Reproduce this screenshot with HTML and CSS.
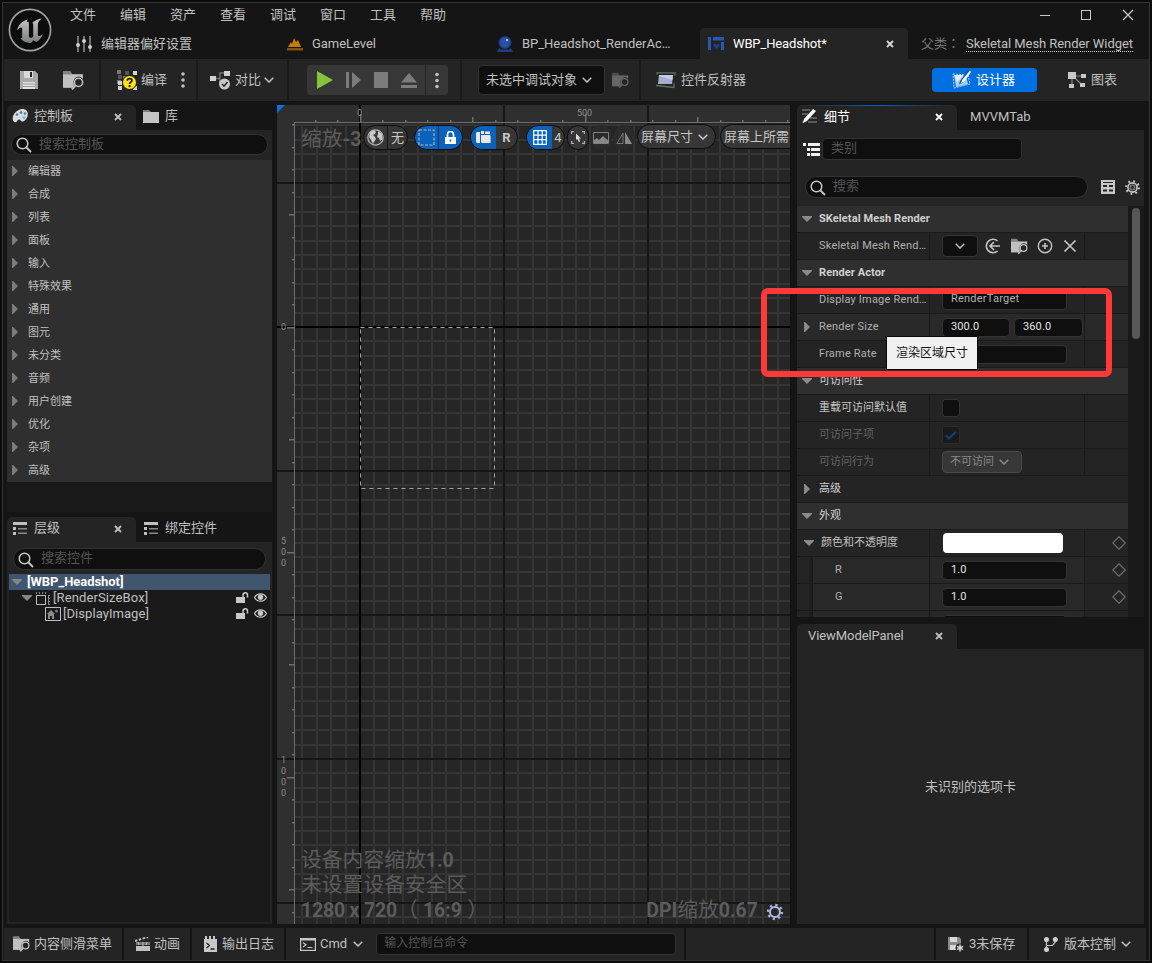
FILE: index.html
```html
<!DOCTYPE html>
<html lang="zh-CN">
<head>
<meta charset="utf-8">
<title>WBP_Headshot</title>
<link rel="stylesheet" href="styles.css">
</head>
<body>
<svg class="defs" width="0" height="0">
  <symbol id="chev" viewBox="0 0 10 6"><path d="M.7.7 5 5 9.300.7" fill="none" stroke="currentColor" stroke-width="1.5"/></symbol>
  <symbol id="close" viewBox="0 0 8 8"><path d="M1 1l6 6M7 1L1 7" stroke="currentColor" stroke-width="1.8"/></symbol>
  <symbol id="mag" viewBox="0 0 16 16"><circle cx="6.500" cy="6.500" r="5.300" fill="none" stroke="currentColor" stroke-width="1.5"/><path d="M10.500 10.500L15 15" stroke="currentColor" stroke-width="1.8"/></symbol>
  <symbol id="right" viewBox="0 0 6 10"><path d="M0 0h1l5 5-5 5H0z" fill="currentColor"/></symbol>
  <symbol id="down" viewBox="0 0 10 6"><path d="M0 0h10v1L5 6 0 1z" fill="currentColor"/></symbol>
  <symbol id="browse" viewBox="0 0 20 18"><path d="M0 0h7l2 3H0z" fill="currentColor" opacity=".6"/><path d="M0 3h19v13H0z" fill="currentColor"/><path d="M14.500 5.200a5.700 5.700 0 0 1 5.500 5.500V18H8l2.500-4.500a5.700 5.700 0 0 1 4-8.300z" fill="#242424"/><circle cx="14.800" cy="10.800" r="3.900" fill="none" stroke="currentColor" stroke-width="1.500"/><path d="M12 13.700L8.500 17.500" stroke="currentColor" stroke-width="1.900"/></symbol>
  <symbol id="tree" viewBox="0 0 15 13"><path d="M0 0h14v3H0zM0 5h3v3H0zM0 10h3v3H0z" fill="#c0c0c0"/><path d="M5 6h9v1.500H5zM5 10.500h9V12H5z" fill="#8a8a8a"/></symbol>
  <symbol id="unlock" viewBox="0 0 13 11"><path d="M0 5h9v6H0z" fill="#c8c8c8"/><path d="M7 5V3a2.200 2.200 0 0 1 4.500 0v2.500" fill="none" stroke="#c8c8c8" stroke-width="1.500"/></symbol>
  <symbol id="eye" viewBox="0 0 13 9"><path d="M.6 4.500C3-.4 10-.4 12.400 4.500 10 9.400 3 9.400.6 4.500z" fill="none" stroke="#c8c8c8" stroke-width="1.200"/><circle cx="6.500" cy="4.300" r="2.700" fill="#c8c8c8"/></symbol>
  <symbol id="diamond" viewBox="0 0 14 14"><path d="M7 .8L13.200 7 7 13.200.8 7z" fill="none" stroke="#6c6c6c" stroke-width="1.300"/></symbol>
  <symbol id="dots" viewBox="0 0 4 16"><circle cx="2" cy="2" r="1.800" fill="#c0c0c0"/><circle cx="2" cy="8" r="1.800" fill="#c0c0c0"/><circle cx="2" cy="14" r="1.800" fill="#c0c0c0"/></symbol>
</svg>

<div class="window">
  <header class="titlebar">
    <svg class="logo" width="44" height="44" viewBox="0 0 44 44">
      <defs><linearGradient id="metal" x1="0" y1="0" x2="0" y2="1"><stop offset="0" stop-color="#c4c4c4"/><stop offset="1" stop-color="#7b7f7e"/></linearGradient></defs>
      <circle cx="22" cy="22" r="20.600" fill="#0c0c0c" stroke="#a0a3a2" stroke-width="1.600"/>
      <path d="M19.600 11.500C14 13 10 17 9 22.500c1.500-2 3.500-3.500 4.500-3 .7.400.7 1.500.7 2.500v7c0 1-1 1.600-1.800 1.300 2.500 3.200 6.600 5 10.600 4.600l2.500-2.700 2.800 1.800c3.200-1.800 5.600-4.800 6.500-8.200-1.500 1.500-3.300 2.700-4.300 2.300-.6-.3-.6-1-.6-1.800V16.500c0-2.500 1.500-4 3.800-6-3.800.5-6.800 1.800-9.600 4.300.9.200 1.100.9 1.100 1.700v12c-.7.900-2 1.500-3 1.200-1-.2-1.300-1-1.300-2V16c0-2.500-1-2.500-2-1.800-.2-1 .3-1.900 1.200-2.700z" fill="url(#metal)"/>
    </svg>
    <div class="titlerows">
      <div class="menurow">
        <nav class="menu"><span>文件</span><span>编辑</span><span>资产</span><span>查看</span><span>调试</span><span>窗口</span><span>工具</span><span>帮助</span></nav>
        <div class="winbtns">
          <svg width="10" height="12" viewBox="0 0 10 12"><path d="M0 6.500h10" stroke="#c8c8c8"/></svg>
          <svg width="10" height="12" viewBox="0 0 10 12"><rect x=".5" y="1.500" width="9" height="9" fill="none" stroke="#c8c8c8"/></svg>
          <svg width="12" height="12" viewBox="0 0 12 12"><path d="M1 1l10 10M11 1L1 11" stroke="#c8c8c8" stroke-width="1.300"/></svg>
        </div>
      </div>
      <div class="doctabs">
        <div class="doctab t1"><svg width="16" height="16" viewBox="0 0 16 16"><path d="M2 0v16M8 0v16M14 0v16" stroke="#b0b0b0" stroke-width="1.200"/><g fill="#d0d0d0"><circle cx="2" cy="9" r="2"/><circle cx="8" cy="5" r="2"/><circle cx="14" cy="11" r="2"/></g></svg><span>编辑器偏好设置</span></div>
        <div class="doctab t2"><svg width="16" height="14" viewBox="0 0 16 14"><path d="M1 10L4 5l1 2 2-6 2 4 2-2 3 7z" fill="#c67a08"/><path d="M0 11h16v2.500H0z" fill="#83520b"/></svg><span>GameLevel</span></div>
        <div class="doctab t3"><svg width="16" height="16" viewBox="0 0 16 16"><circle cx="8" cy="6.500" r="6.500" fill="#1f3e80"/><circle cx="8" cy="6.500" r="5" fill="#2950a2"/><circle cx="10" cy="4" r="1.200" fill="#9fb8ea"/><path d="M2 12l2 1.500h8L14 12l2 4H0z" fill="#1f3e80"/></svg><span>BP_Headshot_RenderAc…</span></div>
        <div class="doctab t4"><svg width="16" height="14" viewBox="0 0 16 14"><path d="M0 0h3v13H0zM5 0h11v3.500H5zM13 5h3v8h-3z" fill="#2857b8"/><path d="M8.500 12L5.500 9V7.500L7 6.800l1.500 1 1.500-1 1.500.7V9z" fill="#223f7c"/></svg><span>WBP_Headshot*</span><svg class="x" width="8" height="8"><use href="#close"/></svg></div>
        <div class="parent"><span lang="zh-TW">父类：</span><a>Skeletal Mesh Render Widget</a></div>
      </div>
    </div>
  </header>

  <div class="toolbar">
    <div class="tg g1">
      <svg width="18" height="18" viewBox="0 0 18 18"><path d="M0 0h15l3 3v15H0z" fill="#a8a8a8"/><path d="M4 0h9v7H4z" fill="#dadada"/><path d="M10 1h2v5h-2z" fill="#242424"/><path d="M3 11h12v7H3z" fill="#e0e0e0"/><path d="M3 13h12M3 15.500h12" stroke="#9a9a9a"/></svg>
      <svg class="brw" width="21" height="19"><use href="#browse"/></svg>
    </div>
    <div class="tg g2">
      <svg width="21" height="20" viewBox="0 0 21 20"><path d="M0 0h4v4H0zM0 10h4v4H0zM6 6h4v4H6z" fill="#777"/><path d="M8 1h4v4H8zM1 5h4v4H1z" fill="#555"/><path d="M16 1h4v4h-4zM1 11h4v4H1zM1 16h4v4H1zM16 16h4v4h-4z" fill="#d0d0d0"/><circle cx="12.500" cy="12.500" r="7" fill="#ffe11a" stroke="#151515"/><path d="M10.300 10.800c0-3 4.600-3 4.600-.3 0 1.700-2.300 1.700-2.300 3.500" fill="none" stroke="#111" stroke-width="1.700"/><circle cx="12.600" cy="16.200" r="1.100" fill="#111"/></svg>
      <span>编译</span><svg class="dt" width="4" height="16"><use href="#dots"/></svg>
    </div>
    <div class="tg g3">
      <svg width="21" height="20" viewBox="0 0 21 20"><path d="M5 8.500h5V3h5M10 8.500v5" fill="none" stroke="#777" stroke-width="1.300"/><path d="M0 6h6v5H0zM14 1h6v5h-6z" fill="#d0d0d0"/><circle cx="14.500" cy="14" r="5.500" fill="#c8c8c8"/><path d="M12 14l2 2.200 3.500-4.200" fill="none" stroke="#222" stroke-width="1.500"/></svg>
      <span>对比</span><svg width="10" height="6"><use href="#chev"/></svg>
    </div>
    <div class="tg g4">
      <div class="play">
        <svg width="16" height="18" viewBox="0 0 16 18"><path d="M0 0l16 9-16 9z" fill="#86c43c"/></svg>
        <svg width="15" height="16" viewBox="0 0 15 16"><path d="M0 0h3v16H0zM6 0l9 8-9 8z" fill="#7c7c7c"/></svg>
        <svg width="14" height="16" viewBox="0 0 14 16"><path d="M0 0h14v16H0z" fill="#7c7c7c"/></svg>
        <svg width="16" height="15" viewBox="0 0 16 15"><path d="M8 0l8 9.500H0zM0 12h16v3H0z" fill="#7c7c7c"/></svg>
        <i></i>
        <svg width="4" height="17"><use href="#dots"/></svg>
      </div>
    </div>
    <div class="tg g5">
      <div class="debug"><span>未选中调试对象</span><svg width="10" height="6"><use href="#chev"/></svg></div>
      <svg class="dim" width="17" height="17"><use href="#browse"/></svg>
    </div>
    <div class="tg g6">
      <svg width="20" height="17" viewBox="0 0 20 17"><path d="M1 2.500V.8h18v3M18 11v4.500L0 13.500" fill="none" stroke="#597459" stroke-width="1.300"/><path d="M3 3h14l-1 9H2z" fill="#a7adcf"/><path d="M3 3h14l-.6 5L3 4z" fill="#c6cae2"/></svg>
      <span>控件反射器</span>
    </div>
    <div class="designer"><svg width="19" height="19" viewBox="0 0 19 19"><path d="M2 5l12 1 2 8-12 3z" fill="#a8cdf5"/><path d="M2 5h10l-7 7z" fill="#e0eefc"/><path d="M1 4l15 1 2 9-16 4z" fill="none" stroke="#e4effa" stroke-width=".8" stroke-dasharray="2 1"/><path d="M8 11L16 0l3 1-7 11-5 2.500z" fill="#0a58ac"/><path d="M18 .5l-7.500 9-2 4 4-2L19 2z" fill="#fff"/></svg><span>设计器</span></div>
    <div class="graph"><svg width="19" height="16" viewBox="0 0 19 16"><path d="M4 4h12M4 4v9M5 4l9 9" stroke="#8a8a8a" stroke-width="1.200"/><path d="M0 0h8v7H0zM13 2h5v4h-5zM1 12h5v4H1zM12 11h5v4h-5z" fill="#c8c8c8"/></svg><span>图表</span></div>
  </div>

  <main class="main">
    <aside class="left">
      <div class="tabs">
        <div class="tab on w129"><svg width="16" height="14" viewBox="0 0 16 14"><path d="M8 .5C13-1 16 2 15.800 5c0 4-2.800 7-5 7.500-2.500.5-2-2.500-4-2-2 .6-1.500 3-3.800 2.700C-1 12.500 0 3 8 .5z" fill="#d8dde2"/><circle cx="5" cy="5.500" r="1.300" fill="#4d7fa6"/><circle cx="9" cy="3.500" r="1.300" fill="#56708c"/><circle cx="13" cy="4.500" r="1.300" fill="#4d7fa6"/><circle cx="12" cy="8.500" r="1.600" fill="#7db4e0"/></svg><span>控制板</span><svg class="x" width="8" height="8"><use href="#close"/></svg></div>
        <div class="tab"><svg width="16" height="13" viewBox="0 0 16 13"><path d="M0 0h6l2 2H0z" fill="#7c7c7c"/><path d="M0 2h16v11H0z" fill="#c4c4c4"/></svg><span>库</span></div>
      </div>
      <div class="palette">
        <div class="search"><svg width="16" height="16"><use href="#mag"/></svg><span>搜索控制板</span></div>
        <ul class="cats">
          <li><svg><use href="#right"/></svg>编辑器</li><li><svg><use href="#right"/></svg>合成</li><li><svg><use href="#right"/></svg>列表</li><li><svg><use href="#right"/></svg>面板</li><li><svg><use href="#right"/></svg>输入</li><li><svg><use href="#right"/></svg>特殊效果</li><li><svg><use href="#right"/></svg>通用</li><li><svg><use href="#right"/></svg>图元</li><li><svg><use href="#right"/></svg>未分类</li><li><svg><use href="#right"/></svg>音频</li><li><svg><use href="#right"/></svg>用户创建</li><li><svg><use href="#right"/></svg>优化</li><li><svg><use href="#right"/></svg>杂项</li><li><svg><use href="#right"/></svg>高级</li>
        </ul>
      </div>
      <div class="tabs low">
        <div class="tab on w129"><svg width="15" height="13"><use href="#tree"/></svg><span>层级</span><svg class="x" width="8" height="8"><use href="#close"/></svg></div>
        <div class="tab"><svg width="15" height="13"><use href="#tree"/></svg><span>绑定控件</span></div>
      </div>
      <div class="hier">
        <div class="search"><svg width="16" height="16"><use href="#mag"/></svg><span>搜索控件</span></div>
        <div class="treebox">
          <div class="tr sel"><svg width="10" height="6"><use href="#down"/></svg><b>[WBP_Headshot]</b></div>
          <div class="tr r2"><svg width="10" height="6"><use href="#down"/></svg><svg class="ic" width="14" height="14" viewBox="0 0 14 14"><path d="M.5 3.500h9v9h-9z" fill="none" stroke="#c0c0c0"/><path d="M.5 0v2M3.500 0v2M6.500 0v2M9.500 0v2M12 3.500h2M12 6.500h2M12 9.500h2M12 12.500h2M12.500 4v9" stroke="#888" fill="none"/></svg><span>[RenderSizeBox]</span><svg class="lk" width="13" height="11"><use href="#unlock"/></svg><svg class="ey" width="13" height="9"><use href="#eye"/></svg></div>
          <div class="tr r3"><svg class="ic" width="16" height="14" viewBox="0 0 16 14"><path d="M.5.5h15v13H.500z" fill="none" stroke="#c0c0c0"/><path d="M2 7l4-4 4 4H9v5H7V9H5v3H3V7z" fill="#8a8a8a"/><circle cx="11.500" cy="4" r="1.500" fill="#777"/></svg><span>[DisplayImage]</span><svg class="lk" width="13" height="11"><use href="#unlock"/></svg><svg class="ey" width="13" height="9"><use href="#eye"/></svg></div>
        </div>
      </div>
    </aside>

    <section class="canvas">
      <svg id="grid" width="513" height="819" viewBox="277 105 513 819"></svg>
      <div class="zoomtxt">缩放<b>-3</b></div>
      <div class="pills">
        <div class="pill p1"><span class="c"><svg width="17" height="17" viewBox="0 0 17 17"><circle cx="8.500" cy="8.500" r="7.700" fill="#3a3a3a" stroke="#b8b8b8" stroke-width="1.200"/><path d="M3 3l4-2 2 2-1 2-2 1 2 2 1 2-2 3-1 2-2-4-2-3zM11 2l4 3 .5 5-2.500 2-1-3-2-1 1-3z" fill="#c8c8c8"/></svg></span><span>无</span></div>
        <div class="pill p2 blue"><span><svg width="17" height="17" viewBox="0 0 17 17"><rect x="1" y="1" width="15" height="15" fill="none" stroke="#b9b19c" stroke-width="1.200" stroke-dasharray="3 1.500"/></svg></span><span><svg width="11" height="13" viewBox="0 0 11 13"><path d="M0 6h11v7H0z" fill="#fff"/><path d="M2.500 6V3.500a3 3 0 0 1 6 0V6" fill="none" stroke="#fff" stroke-width="1.700"/><path d="M5.500 8.500v2" stroke="#0b5fb8" stroke-width="1.500"/></svg></span></div>
        <div class="pill p3"><span class="bl"><svg width="15" height="13" viewBox="0 0 15 13"><path d="M1 1h3v11H1L0 11V2zM5 0h3v3H5zM9 .5h5V3H9zM5 4h9l.6 1v7H6L5 11z" fill="#e8e8e8"/></svg></span><b>R</b></div>
        <div class="pill p4"><span class="bl"><svg width="14" height="15" viewBox="0 0 14 15"><path d="M.7.7h12.600v13.600H.700zM.7 5.200h12.600M.7 9.700h12.600M5 .7v13.600M9.200.7v13.600" fill="none" stroke="#fff" stroke-width="1.200"/></svg></span><span class="four">4</span></div>
        <div class="pill rd"><svg width="14" height="13" viewBox="0 0 14 13"><path d="M.6 3V.6H3M11 .6h2.400V3M.6 10v2.400H3M11 12.400h2.400V10" fill="none" stroke="#aaa" stroke-width="1.200"/><path d="M5 2.500l5 5H8l1 3-1.300.500-1.200-3L5 9z" fill="#ddd"/></svg></div>
        <div class="pill rd off"><svg width="16" height="12" viewBox="0 0 16 12"><path d="M.5.5h15v11H.500z" fill="none" stroke="#808080"/><path d="M1 11V8l3-2 2 2 4-4 2 2 3 2v3z" fill="#888"/></svg></div>
        <div class="pill rd off"><svg width="16" height="12" viewBox="0 0 16 12"><path d="M7 1v10.500H1z" fill="none" stroke="#777"/><path d="M9 0v12h7z" fill="#8a8a8a"/></svg></div>
        <div class="pill p5"><span>屏幕尺寸</span><svg width="10" height="6"><use href="#chev"/></svg></div>
        <div class="pill p6"><span>屏幕上所需</span></div>
      </div>
      <div class="info"><div>设备内容缩放<b>1.0</b></div><div>未设置设备安全区</div><div><b class="res">1280 x 720</b>（ <b>16:9</b> ）</div></div>
      <div class="dpi"><b>DPI</b>缩放<b>0.67</b><svg width="18" height="18" viewBox="0 0 18 18"><circle cx="9" cy="9" r="5" fill="none" stroke="#b0bde8" stroke-width="2"/><circle cx="9" cy="9" r="7" fill="none" stroke="#a3b3ea" stroke-width="2.400" stroke-dasharray="2.200 3.300"/></svg></div>
    </section>

    <aside class="right">
      <div class="tabs">
        <div class="tab on w160 hot"><svg width="16" height="15" viewBox="0 0 16 15"><path d="M0 1h8M0 5h6M8 9h7M6 13h9M0 13h2" stroke="#6c6c6c" stroke-width="1.500"/><path d="M11 0l3 2L5 12l-4 2 1-4z" fill="#fff"/></svg><span>细节</span><svg class="x" width="8" height="8"><use href="#close"/></svg></div>
        <div class="tab mv"><span>MVVMTab</span></div>
      </div>
      <div class="details">
        <div class="catrow"><svg width="17" height="13" viewBox="0 0 17 13"><path d="M0 0h3v3H0zM5 0h12v3H5zM4 5h3v3H4zM8 5h9v3H8zM4 10h3v3H4zM8 10h9v3H8z" fill="#f0f0f0"/></svg><div class="inp">类别</div></div>
        <div class="srow"><div class="search"><svg width="16" height="16"><use href="#mag"/></svg><span>搜索</span></div>
          <svg class="tb" width="14" height="14" viewBox="0 0 14 14"><path d="M0 0h14v14H0z" fill="#c8c8c8"/><path d="M2 5h4v2H2zM8 5h4v2H8zM2 9.500h4v2H2zM8 9.500h4v2H8zM2 2h10v1H2z" fill="#242424"/></svg>
          <svg width="15" height="15" viewBox="0 0 15 15"><circle cx="7.500" cy="7.500" r="4.600" fill="none" stroke="#c8c8c8" stroke-width="1.600"/><circle cx="7.500" cy="7.500" r="6.400" fill="none" stroke="#c8c8c8" stroke-width="2" stroke-dasharray="1.800 3.226"/><circle cx="7.500" cy="7.500" r="2.200" fill="none" stroke="#777" stroke-width="1.500"/></svg></div>
        <div class="props">
          <div class="rows">
            <div class="row hd"><svg class="dn"><use href="#down"/></svg><b>SKeletal Mesh Render</b></div>
            <div class="row"><div class="n">Skeletal Mesh Rend…</div><div class="v"><div class="combo"><svg width="10" height="6"><use href="#chev"/></svg></div>
              <div class="acts"><svg width="16" height="16" viewBox="0 0 16 16"><path d="M12.500 3A6.700 6.700 0 1 0 12.500 13" fill="none" stroke="#c4c4c4" stroke-width="1.600"/><path d="M15 8H5M9 4L5 8l4 4" fill="none" stroke="#c4c4c4" stroke-width="1.700"/></svg><svg width="17" height="17"><use href="#browse"/></svg><svg width="16" height="16" viewBox="0 0 16 16"><circle cx="8" cy="8" r="6.700" fill="none" stroke="#c4c4c4" stroke-width="1.400"/><path d="M8 5v6M5 8h6" stroke="#c4c4c4" stroke-width="1.600"/></svg><svg width="14" height="14" viewBox="0 0 14 14"><path d="M1.500 1.500l11 11M12.500 1.500l-11 11" stroke="#c4c4c4" stroke-width="1.700"/></svg></div></div><div class="e"></div></div>
            <div class="row hd"><svg class="dn"><use href="#down"/></svg><b>Render Actor</b></div>
            <div class="row"><div class="n">Display Image Rend…</div><div class="v"><div class="f w124 gray tall">RenderTarget</div></div><div class="e"></div></div>
            <div class="row lit"><div class="n"><svg class="rt"><use href="#right"/></svg>Render Size</div><div class="v"><div class="f w67">300.0</div><div class="f w68">360.0</div></div><div class="e"></div></div>
            <div class="row"><div class="n">Frame Rate</div><div class="v"><div class="f w124"></div></div><div class="e"></div></div>
            <div class="row hd"><svg class="dn"><use href="#down"/></svg><span>可访问性</span></div>
            <div class="row"><div class="n bright">重载可访问默认值</div><div class="v"><div class="chk"></div></div><div class="e"></div></div>
            <div class="row"><div class="n faint">可访问子项</div><div class="v"><div class="chk dis"><svg width="12" height="9" viewBox="0 0 12 9"><path d="M1 4.500l3 3L11 .8" fill="none" stroke="#0b477f" stroke-width="1.900"/></svg></div></div><div class="e"></div></div>
            <div class="row"><div class="n faint">可访问行为</div><div class="v"><div class="sel2">不可访问<svg width="10" height="6"><use href="#chev"/></svg></div></div><div class="e"></div></div>
            <div class="row adv"><svg class="ar"><use href="#right"/></svg><span>高级</span></div>
            <div class="row hd"><svg class="dn"><use href="#down"/></svg><span>外观</span></div>
            <div class="row"><div class="n col"><svg class="rt2"><use href="#down"/></svg>颜色和不透明度</div><div class="v"><div class="white"></div></div><div class="e"><svg width="14" height="14"><use href="#diamond"/></svg></div></div>
            <div class="row sub"><div class="n">R</div><div class="v"><div class="f w124">1.0</div></div><div class="e"><svg width="14" height="14"><use href="#diamond"/></svg></div></div>
            <div class="row sub"><div class="n">G</div><div class="v"><div class="f w124">1.0</div></div><div class="e"><svg width="14" height="14"><use href="#diamond"/></svg></div></div>
            <div class="row sub"><div class="n"></div><div class="v"><div class="f w124"></div></div><div class="e"></div></div>
          </div>
          <div class="track"><div class="thumb"></div></div>
        </div>
      </div>
      <div class="tabs vm"><div class="tab on w160"><span>ViewModelPanel</span><svg class="x" width="8" height="8"><use href="#close"/></svg></div></div>
      <div class="vmbody">未识别的选项卡</div>
    </aside>
  </main>

  <footer class="status">
    <div class="s s1"><svg width="17" height="16"><use href="#browse"/></svg><span>内容侧滑菜单</span></div>
    <div class="s s2"><svg width="16" height="14" viewBox="0 0 16 14"><path d="M0 4L13 0" stroke="#c0c0c0" stroke-width="2" stroke-dasharray="2.500 1.500"/><path d="M1 5h14v3H1z" fill="#777"/><path d="M1 9h14v5H1z" fill="#c0c0c0"/><path d="M3 5l1 3M8 5v5M12 5l-1 3" stroke="#c0c0c0"/></svg><span>动画</span></div>
    <div class="s s3"><svg width="13" height="16" viewBox="0 0 13 16"><path d="M0 3h1V0h2v3h2V0h2v3h2V0h2v3h2v13H0z" fill="#c8c8c8"/><path d="M2.500 7l3 2.500-3 2.500M6.500 13h4" fill="none" stroke="#222" stroke-width="1.300"/></svg><span>输出日志</span></div>
    <div class="s s4"><svg width="16" height="13" viewBox="0 0 16 13"><rect x=".6" y=".6" width="14.800" height="11.800" fill="none" stroke="#c8c8c8" stroke-width="1.200"/><path d="M0 0h16v2.500H0z" fill="#c8c8c8"/><path d="M3 4.500l3 2.200L3 9M7.500 9.500h5" fill="none" stroke="#c8c8c8" stroke-width="1.200"/></svg><span>Cmd</span><svg width="10" height="6"><use href="#chev"/></svg><div class="cmd">输入控制台命令</div></div>
    <div class="s s5"></div>
    <div class="s s6"><svg width="16" height="15" viewBox="0 0 16 15"><path d="M0 0h11l2 2v6l-4 5H0z" fill="#8a8a8a"/><path d="M2 0h7v5H2zM2 8h6v5H2z" fill="#d8d8d8"/><circle cx="12" cy="11" r="4.500" fill="#242424"/><path d="M12 7.500v7M9 9.300l6 3.400M15 9.300l-6 3.400" stroke="#d8d8d8" stroke-width="1.500"/></svg><span>3未保存</span></div>
    <div class="s s7"><svg width="14" height="15" viewBox="0 0 14 15"><path d="M2.500 2.500v10M2.500 8.500h6l2.500-3v-3" fill="none" stroke="#c0c0c0" stroke-width="1.200"/><g fill="#d0d0d0"><circle cx="2.500" cy="2.500" r="2.500"/><circle cx="11.300" cy="2.500" r="2.500"/><circle cx="2.500" cy="12.500" r="2.500"/></g></svg><span>版本控制</span><svg width="10" height="6"><use href="#chev"/></svg></div>
  </footer>

  <div class="tooltip">渲染区域尺寸</div>
  <div class="mark"></div>
</div>
<script src="grid.js"></script>
</body>
</html>
```
FILE: styles.css
```css
*{box-sizing:border-box}
body{margin:0;background:#0a0a0a;font-family:Roboto,"Noto Sans CJK SC",sans-serif;font-size:13px;line-height:16px;color:#c0c0c0;overflow:hidden}
svg{display:block;flex:none}
span{white-space:nowrap}
.defs{position:absolute}
.window{position:relative;width:1152px;height:963px;padding:3px 3px 3px 4px;background:#151515;display:flex;flex-direction:column;overflow:hidden;box-shadow:inset 0 0 0 2px #0b0b0b,inset 0 0 0 3px #353535}

.titlebar{display:flex;height:56px;flex:none}
.logo{margin:5px 0 0 4px}
.titlerows{flex:1;display:flex;flex-direction:column}
.menurow{height:25px;display:flex;justify-content:space-between}
.menu{display:flex;padding-left:18px}
.menu span{width:50px;line-height:23px}
.winbtns{display:flex;align-items:center;gap:31px;padding:0 15px 2px 0}
.doctabs{display:flex;height:31px}
.doctab{display:flex;align-items:center;height:31px}
.t1{padding-left:24px;width:235px;gap:9px}
.t2{width:210px;gap:9px;letter-spacing:-.05px}
.t3{width:203px;gap:9px;letter-spacing:-.02px}
.t4{width:208px;background:#242424;border-radius:5px 5px 0 0;padding-left:8px;gap:9px;color:#fff;letter-spacing:-.14px}
.t4 .x{margin-left:auto;margin-right:14px;color:#d8d8d8}
.parent{display:flex;align-items:center;padding-left:13px;color:#777}
.parent span{width:45px;font-family:"Noto Sans CJK TC",sans-serif;line-height:16px;margin-top:-1px}
.parent a{color:#c0c0c0;border-bottom:1px dotted #d0d0d0;line-height:15px;white-space:nowrap;margin-top:1px;letter-spacing:-.06px}

.toolbar{display:flex;height:42px;flex:none;background:#242424;align-items:center}
.tg{display:flex;align-items:center;height:40px;border-right:2px solid #1a1a1a}
.g1{width:97px;padding-left:16px;gap:25px}
.g2{width:97px;padding-left:16px;gap:3px}
.g2 .dt{margin-left:11px}
.g3{width:91px;padding-left:12px;gap:4px}
.g3 svg:last-child{margin-left:-1px}
.g4{width:173px;padding-left:18px}
.play{display:flex;align-items:center;width:141px;height:30px;background:#373737;border-radius:4px;padding-left:10px;gap:13px}
.play i{width:1px;height:30px;background:#242424;margin:0 -5px 0 -5px}
.play svg:last-child{margin-left:1px}
.g5{width:179px;padding-left:16px;gap:7px}
.debug{display:flex;align-items:center;width:127px;height:30px;border:1px solid #343434;border-radius:4px;background:#0f0f0f;padding-left:7px;gap:5px}
.dim{color:#666}
.g6{border:0;padding-left:15px;gap:5px;width:291px}
.designer{display:flex;align-items:center;width:105px;height:24px;background:#0070e0;border-radius:4px;padding-left:20px;gap:5px;color:#fff;margin-top:-1px}
.graph{display:flex;align-items:center;gap:4px;margin-left:31px}

.main{display:grid;grid-template-columns:265px 513px 347px;column-gap:5px;margin:4px 0 4px 3px;height:819px;flex:none}
.right{margin-left:2px;width:347px}
.left,.right{display:flex;flex-direction:column;min-width:0}
.tabs{display:flex;height:25px;flex:none}
.tab{display:flex;align-items:center;gap:6px;padding:0 0 2px 7px;height:25px}
.left .tab{padding-bottom:3px}
.low .tab>svg:first-child{margin-left:1px}
.tab.on{background:#242424;border-radius:5px 5px 0 0;padding-left:5px}
.tab .x{margin-left:auto;margin-right:14px;margin-top:1px}
.w129{width:129px}
.w160{width:160px}
.hot{color:#fff;background:linear-gradient(90deg,#242424,#0b62bd 50%,#242424) top/100% 1px no-repeat,#242424!important}
.mv{padding-left:13px;letter-spacing:.03px}
.search{display:flex;align-items:center;height:21px;border:1px solid #323232;border-radius:11px;background:#0f0f0f;color:#555;gap:7px;padding-left:4px}
.search svg{color:#c8c8c8;margin-top:1px}
.search span{margin-top:-2px}
.palette{height:382px;flex:none;border-top:4px solid #242424;background:linear-gradient(#242424 26px,#1a1a1a 26px)}
.palette .search{margin:0 4px 0}
.cats{list-style:none;margin:5px 0 0;padding:0;background:#2f2f2f;font-size:11px}
.cats li{height:23px;display:flex;align-items:center;gap:10px;padding-left:5px}
.cats svg{width:6px;height:10px;color:#7c7c7c;margin-top:-1px}
.low{margin-top:5px}
.hier{flex:1;background:#242424;display:flex;flex-direction:column;padding:6px 2px 2px}
.hier .search{margin:0 4px 5px;flex:none;height:22px}
.treebox{flex:1;background:#1a1a1a;margin-top:-1px}
.tr{height:16px;display:flex;align-items:center;padding-left:3px}
.tr.sel{background:#40566f;color:#fff;gap:5px;font-size:13px;letter-spacing:-.05px}
.tr>svg:first-child{color:#858585}
.r2{padding:0 3px 0 13px;letter-spacing:.12px}
.r3{padding:0 3px 0 36px;letter-spacing:.06px}
.r2 .ic{margin:1px 3px 0 4px}
.tr.r3 .ic{margin:0 2px 0 0;color:inherit}
.lk{margin:-1px 5px 0 auto}
.ey{margin-top:-2px}

.canvas{position:relative;overflow:hidden;background:#262626}
#grid{font:9px Roboto,sans-serif}
.zoomtxt,.info,.dpi{position:absolute;font-size:20.800px;color:#5c5c5c;line-height:25px;white-space:nowrap}
.zoomtxt b,.info b,.dpi b{font-size:19.500px}
.res{letter-spacing:-.2px}
.zoomtxt{left:24px;top:22px}
.info{left:24px;top:743px}
.dpi{right:6px;top:793px;display:flex;align-items:center}
.dpi svg{margin-left:8px;margin-top:3px}
.pills{position:absolute;left:86px;top:20px;display:flex;height:25px;color:#c8c8c8}
.pill{display:flex;flex:none;height:25px;border:1px solid #0c0c0c;border-radius:13px;background:rgba(56,56,56,.9);overflow:hidden;align-items:center}
.pill span,.pill b{display:flex;align-items:center;justify-content:center;height:25px}
.p1{width:45px;margin-right:6px}
.p1>span{width:20px}
.p1 .c{width:25px;border-right:1px solid #151515}
.p2{width:49px;margin-right:7px;background:#0b62bd}
.p2>span{flex:1}.p2>span+span{border-left:1px solid #06346a}
.p3{width:48px;margin-right:8px}
.bl{width:25px;background:#0b62bd}
.p3 b{flex:1}
.p4{width:39px;margin-right:2px}
.four{flex:1}
.rd{width:22px;margin-right:1px;justify-content:center}
.off{border-color:#2a2a2a;background:rgba(44,44,44,.9)}
.p5{width:79px;padding-left:3px;gap:5px;margin:-1px 4px 0 1px}
.p6{width:100px;padding-left:3px;border-radius:13px 0 0 13px;margin-top:-1px}

.details{height:487px;flex:none;background:#242424;display:flex;flex-direction:column}
.catrow{display:flex;align-items:center;padding:8px 0 0 6px;gap:2px}
.inp{width:200px;height:22px;border:1px solid #323232;border-radius:4px;background:#0f0f0f;color:#555;padding-left:8px;line-height:17px}
.srow{display:flex;align-items:center;padding:16px 0 0 8px;height:38px}
.srow .search{width:283px;height:22px}
.srow .tb{margin:0 10px 0 13px}
.props{display:flex;flex:none;height:411px;overflow:hidden;margin-top:8px;font-size:11px}
.rows{width:331px}
.row{height:27px;border-bottom:1px solid #1a1a1a;display:flex;background:#242424}
.hd,.adv{align-items:center;color:#d0d0d0}
.hd{background:#2f2f2f}
.hd>b,.hd>span,.adv>span{margin-top:-1px;letter-spacing:.09px}
.dn{width:10px;height:6px;margin:0 7px 0 5px;color:#8a8a8a}
.ar{width:6px;height:10px;margin:0 9px 0 7px;color:#8a8a8a}
.n{width:133px;border-right:1px solid #1a1a1a;padding-left:22px;line-height:26px;white-space:nowrap;position:relative;letter-spacing:.2px;color:#b0b0b0}
.bright{color:#c8c8c8;letter-spacing:0}.faint{color:#636363;letter-spacing:0}
.rt{position:absolute;left:7px;top:8px;width:6px;height:10px;color:#8a8a8a}
.rt2{position:absolute;left:7px;top:10px;width:10px;height:6px;color:#8a8a8a}
.col{padding-left:24px;letter-spacing:0;color:#c0c0c0}
.v{width:155px;border-right:1px solid #1a1a1a;padding-left:12px;display:flex;align-items:center;gap:4px}
.e{width:43px;display:flex;align-items:center;justify-content:flex-end;padding-right:2px}
.lit{background:#292929}
.f{height:19px;background:#0f0f0f;border:1px solid #343434;border-radius:4px;padding-left:8px;line-height:16px;color:#e4e4e4;letter-spacing:.12px;margin-top:1px}
.w124{width:125px}.w67{width:68px}.w68{width:69px}
.tall{height:22px;line-height:19px;margin-top:-2px}
.gray{color:#b0b0b0;letter-spacing:.22px}
.combo{width:36px;height:22px;background:#0f0f0f;border:1px solid #343434;border-radius:4px;display:flex;align-items:center;justify-content:center}
.acts{display:flex;align-items:center;gap:10px;margin-left:3px}
.acts svg:nth-child(3){margin-left:-1px}
.chk{width:18px;height:18px;background:#0f0f0f;border:1px solid #343434;border-radius:3px;display:flex;align-items:center;justify-content:center}
.dis{background:#1a1a1a;border-color:#2c2c2c}
.sel2{width:80px;height:22px;background:#373737;border:1px solid #484848;border-radius:4px;padding-left:7px;display:flex;align-items:center;gap:5px;color:#8a8a8a}
.white{width:120px;height:20px;background:#fff;border-radius:4px;margin-left:1px}
.sub{background:linear-gradient(90deg,#242424 11px,#191919 16px,#282828 16px)}
.sub .n{padding-left:38px}
.sub .e{background:#242424}
.track{width:16px;background:#1a1a1a;padding:2px 4px}
.thumb{height:131px;width:8px;border-radius:4px;background:#575757}
.vm{margin-top:7px}
.vm .tab{padding-left:11px;letter-spacing:-.08px}
.vmbody{flex:1;background:#242424;display:flex;align-items:center;justify-content:center}

.status{display:flex;height:32px;flex:none}
.s{display:flex;align-items:center;background:#242424;border-right:2px solid #151515;height:32px}
.s1{width:120px;padding-left:9px;gap:4px}
.s2{width:68px;padding-left:11px;gap:3px}
.s3{width:94px;padding-left:12px;gap:5px}
.s4{width:400px;padding-left:14px;gap:4px}
.s4>svg+span+svg{margin-left:2px}
.cmd{width:300px;height:22px;border:1px solid #323232;border-radius:4px;background:#0f0f0f;color:#555;font-size:12px;padding-left:7px;line-height:19px;margin-left:9px}
.s5{width:250px}
.s6{width:93px;padding-left:12px;gap:5px}
.s7{width:119px;padding-left:15px;gap:6px}
.s7 svg:last-child{margin-left:-1px}

.tooltip{position:absolute;left:886px;top:336px;width:92px;height:34px;border:1px solid #0a0a0a;background:#f0f0f0;color:#111;font-size:12px;line-height:33px;text-align:center}
.mark{position:absolute;left:761px;top:288px;width:351px;height:89px;border:6px solid #fd3a38;border-radius:7px}
```
FILE: grid.js
```js
// Draws the designer canvas: grid lines, rulers with ticks, and the root outline.
(function () {
  var out = [];
  function rect(x, y, w, h, fill) {
    out.push('<rect x="' + x + '" y="' + y + '" width="' + w + '" height="' + h + '" fill="' + fill + '"/>');
  }
  function text(x, y, s) {
    out.push('<text x="' + x + '" y="' + y + '" fill="#8c8c8c" text-anchor="middle">' + s + '</text>');
  }
  var k;
  rect(277, 105, 513, 17, '#2f2f2f');
  rect(277, 105, 17, 819, '#2f2f2f');
  for (k = -4; k < 30; k++) if (k % 10) rect(Math.round(359 + 14.4 * k), 124, 2, 800, '#353535');
  for (k = -14; k < 42; k++) if (k % 10) rect(295, Math.round(326 + 14.4 * k), 495, 2, '#353535');
  for (k = -1; k < 5; k++) if (k) rect(277, 326 + 144 * k, 513, 2, '#161616');
  for (k = 1; k < 3; k++) rect(359 + 144 * k, 105, 2, 819, '#161616');
  rect(277, 326, 513, 2, '#000');
  rect(359, 105, 2, 819, '#000');
  rect(294, 122, 496, 1, '#6e6e6e');
  rect(294, 122, 1, 802, '#6e6e6e');
  for (k = -2; k < 20; k++) {
    var w = k % 10 === 0 ? 8 : k % 5 === 0 ? 5 : 2;
    rect(Math.round(359.9 + 22.5 * k), 122 - w, 1.5, w, '#6e6e6e');
  }
  for (k = -9; k < 27; k++) {
    var h = k % 10 === 0 ? 7 : k % 5 === 0 ? 5 : 2;
    rect(294 - h, Math.round(326.9 + 22.5 * k), h, 1.5, '#6e6e6e');
  }
  text(359.5, 116, '0'); text(584.5, 116, '500');
  text(283.5, 330, '0');
  '500'.split('').forEach(function (c, i) { text(283.5, 544 + 11 * i, c); });
  '1000'.split('').forEach(function (c, i) { text(283.5, 763 + 11 * i, c); });
  out.push('<path d="M277 105h8l-8 8z" fill="#0b70e0"/>');
  out.push('<rect x="360.500" y="327.500" width="134" height="161" fill="none" stroke="#a4a4a4" stroke-dasharray="4 4"/>');
  document.getElementById('grid').innerHTML = out.join('');
})();
```
